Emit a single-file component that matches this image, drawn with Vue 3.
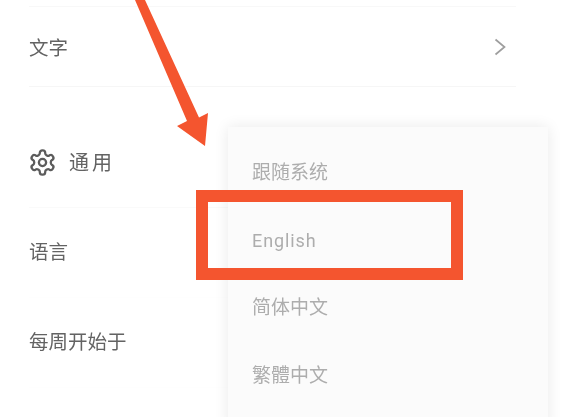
<script setup>
const menuItems = ['跟随系统', 'English', '简体中文', '繁體中文']
</script>

<template>
  <div class="page">
    <div class="list">
      <div class="row text-row">
        <span>文字</span>
        <svg class="chevron" width="12" height="18" viewBox="0 0 12 18" fill="none">
          <path d="M1.5 1.5l9 7.5-9 7.5" stroke="#9e9e9e" stroke-width="1.7" />
        </svg>
      </div>
      <div class="section-head">
        <svg class="gear" width="29" height="29" viewBox="0 0 24 24" fill="none">
          <path d="M12.22 2h-.44a2 2 0 0 0-2 2v.18a2 2 0 0 1-1 1.73l-.43.25a2 2 0 0 1-2 0l-.15-.08a2 2 0 0 0-2.73.73l-.22.38a2 2 0 0 0 .73 2.73l.15.1a2 2 0 0 1 1 1.72v.51a2 2 0 0 1-1 1.74l-.15.09a2 2 0 0 0-.73 2.73l.22.38a2 2 0 0 0 2.73.73l.15-.08a2 2 0 0 1 2 0l.43.25a2 2 0 0 1 1 1.73V20a2 2 0 0 0 2 2h.44a2 2 0 0 0 2-2v-.18a2 2 0 0 1 1-1.73l.43-.25a2 2 0 0 1 2 0l.15.08a2 2 0 0 0 2.73-.73l.22-.39a2 2 0 0 0-.73-2.73l-.15-.08a2 2 0 0 1-1-1.74v-.5a2 2 0 0 1 1-1.74l.15-.09a2 2 0 0 0 .73-2.73l-.22-.38a2 2 0 0 0-2.73-.73l-.15.08a2 2 0 0 1-2 0l-.43-.25a2 2 0 0 1-1-1.73V4a2 2 0 0 0-2-2z" stroke="#5c5c5c" stroke-width="1.9" />
          <circle cx="12" cy="12" r="3" stroke="#5c5c5c" stroke-width="1.9" />
        </svg>
        <span class="head-label">通用</span>
      </div>
      <div class="row setting">语言</div>
      <div class="row setting plain">每周开始于</div>
      <div class="row setting plain last">启动页</div>
    </div>

    <ul class="menu">
      <li v-for="item in menuItems" :key="item" :class="{ latin: item === 'English' }">{{ item }}</li>
    </ul>

    <div class="mark-box"></div>
    <svg class="arrow" width="220" height="150" viewBox="0 0 220 150">
      <path d="M135 0L145 0L199 117.500L208 113L205 146L177 126L187 121Z" fill="#f4552f" />
    </svg>
  </div>
</template>

<style scoped>
.page {
  position: relative;
  width: 564px;
  height: 417px;
  overflow: hidden;
  background: #fff;
  font-family: "Noto Sans CJK SC", "Noto Sans", sans-serif;
  color: #636363;
  font-size: 19.5px;
}
.list {
  padding: 6px 48px 0 29px;
  filter: blur(0.5px);
}
.row {
  display: flex;
  align-items: center;
  justify-content: space-between;
  box-sizing: border-box;
}
.text-row {
  height: 81px;
  border-top: 1px solid #f8f8f8;
  border-bottom: 1px solid #f6f6f6;
}
.setting {
  height: 90px;
  padding-bottom: 4px;
  border-top: 1px solid #fafafa;
}
.plain {
  border-top-color: #fefefe;
}
.last {
  padding-bottom: 0;
  height: 80px;
  line-height: 80px;
}
.chevron {
  margin-right: 10px;
}
.section-head {
  height: 120px;
  box-sizing: border-box;
  padding-top: 56px;
  display: flex;
  align-items: flex-start;
  gap: 12px;
}
.gear {
  flex: none;
  margin: 5px 0 0 -1px;
}
.head-label {
  font-size: 20px;
  line-height: 38px;
  letter-spacing: 3px;
}
.menu {
  position: absolute;
  left: 228px;
  top: 127px;
  width: 320px;
  height: 300px;
  margin: 0;
  padding: 9.750px 24px 0;
  box-sizing: border-box;
  list-style: none;
  background: #fbfbfb;
  box-shadow: 0 0 14px rgba(0, 0, 0, 0.09);
  color: #adadad;
  font-size: 19px;
  filter: blur(0.4px);
}
.menu li {
  height: 67.800px;
  line-height: 67.800px;
}
.menu .latin {
  font-family: "Roboto", sans-serif;
  font-size: 18px;
  letter-spacing: 0.9px;
  line-height: 71.800px;
}
.mark-box {
  position: absolute;
  left: 196px;
  top: 190px;
  width: 267px;
  height: 90px;
  box-sizing: border-box;
  border: 12px solid #f4552f;
}
.arrow {
  position: absolute;
  left: 0;
  top: 0;
}
</style>
